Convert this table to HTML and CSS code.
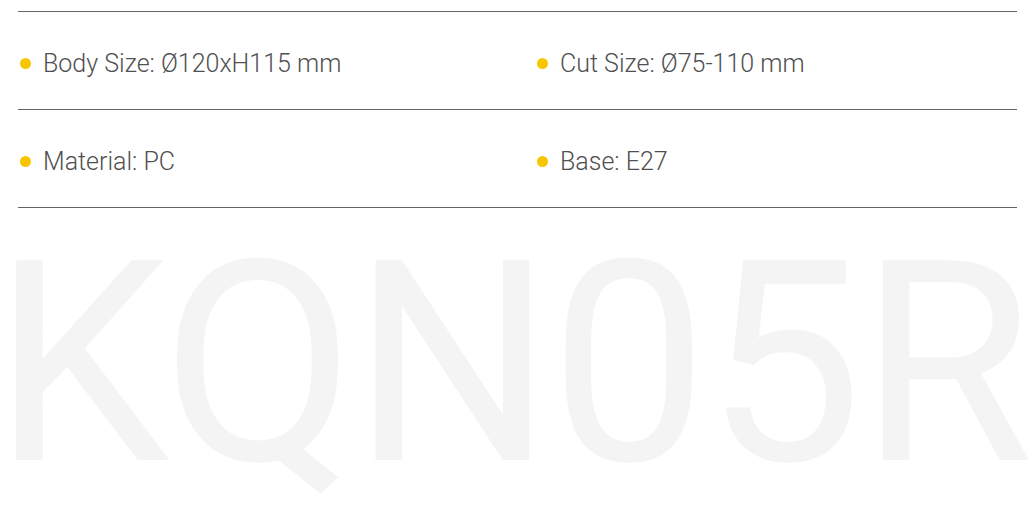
FILE: index.html
```html
<!DOCTYPE html>
<html lang="en">
<head>
  <meta charset="UTF-8">
  <meta name="viewport" content="width=device-width, initial-scale=1.0">
  <title>KQN05R</title>
  <link rel="stylesheet" href="styles.css">
</head>
<body>
  <div class="specs">
    <div class="spec-row">
      <div class="spec"><span class="dot"></span>Body Size: Ø120xH115 mm</div>
      <div class="spec"><span class="dot"></span>Cut Size: Ø75-110 mm</div>
    </div>
    <div class="spec-row">
      <div class="spec"><span class="dot"></span>Material: PC</div>
      <div class="spec"><span class="dot"></span>Base: E27</div>
    </div>
  </div>
  <div class="model">KQN05R</div>
</body>
</html>
```

FILE: styles.css
```css
html, body { margin: 0; padding: 0; background: #fff; }
body { overflow: hidden; width: 1034px; height: 506px; }

.specs { padding: 11px 17px 0 18px; }
.spec-row {
  display: grid;
  grid-template-columns: 517px 1fr;
  height: 97px;
  align-items: center;
  border-bottom: 1px solid #666;
}
.spec-row:first-child { border-top: 1px solid #666; }

.spec {
  display: flex;
  align-items: center;
  padding-top: 5px;
  font-family: Roboto, sans-serif;
  font-weight: 300;
  font-size: 25px;
  color: #505050;
}
.dot {
  width: 11px;
  height: 11px;
  border-radius: 50%;
  background: #f7c600;
  margin: 0 12px 0 2px;
  flex-shrink: 0;
}

.model {
  font-family: Roboto, sans-serif;
  font-size: 281px;
  line-height: 1;
  color: #f4f4f4;
  white-space: nowrap;
  margin: 16px 0 0 -7px;
  letter-spacing: -3px;
}
```
